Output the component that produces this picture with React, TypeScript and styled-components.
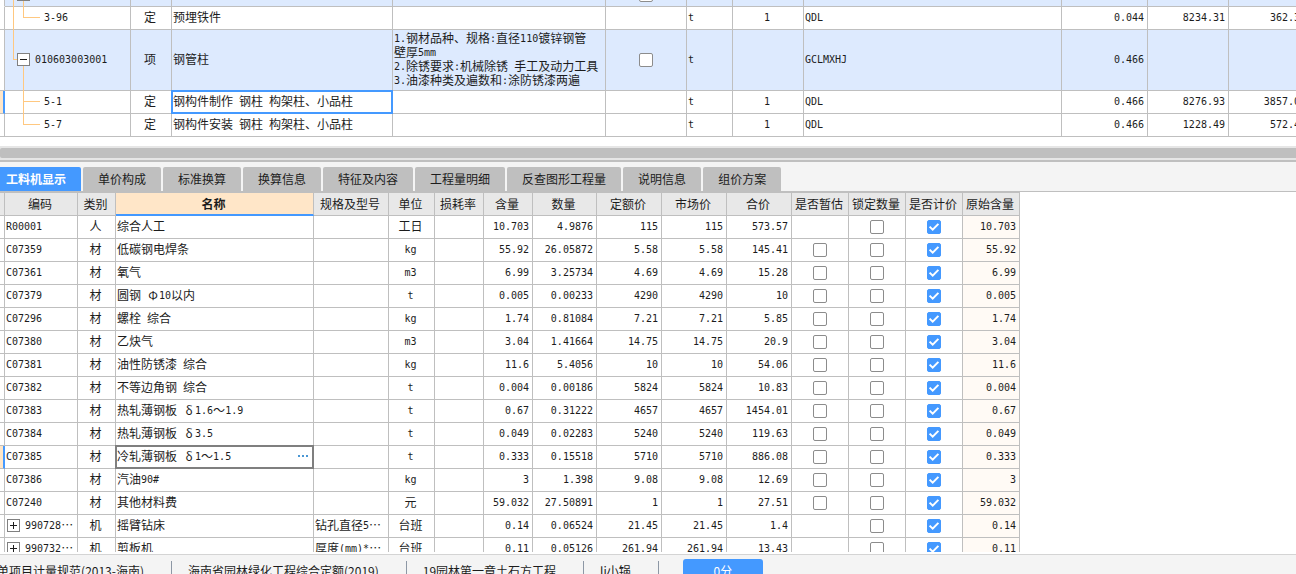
import React, { useState } from "react";
import styled, { createGlobalStyle, css } from "styled-components";

const color = {
  line: "#bfbfbf",
  blue: "#4499ff",
  paleBlue: "#ddeafe",
  peach: "#ffe6c8",
  tree: "#ffc880",
  text: "#1c1c1c",
  head: "#e8e8e8",
  panel: "#f4f4f4",
};

const GlobalStyle = createGlobalStyle`
  * { box-sizing: border-box; }
  body {
    margin: 0;
    overflow: hidden;
    background: #fff;
    color: ${color.text};
    font: 12px/14px "Noto Sans CJK SC", sans-serif;
  }
`;

const Page = styled.div`
  display: flex;
  flex-direction: column;
  height: 100vh;
`;

const Half = styled.span`
  font: 10px/10px "DejaVu Sans Mono", monospace;
  vertical-align: 1px;
  white-space: pre;
`;

/* Sets ASCII runs in the half-width face and leaves Chinese text in the body face. */
function Mixed({ text }: { text: string }) {
  return (
    <>
      {text.split(/([\x20-\x7e]+)/).map((run, i) => (i % 2 ? <Half key={i}>{run}</Half> : run))}
    </>
  );
}

/* ---------- grid ---------- */

const Grid = styled.table<{ $min: number; $fill?: boolean }>`
  table-layout: fixed;
  border-spacing: 0;
  width: ${(p) => (p.$fill ? "100%" : `${p.$min}px`)};
  min-width: ${(p) => p.$min}px;
`;

const Row = styled.tr<{ $group?: boolean; $tall?: boolean }>`
  height: ${(p) => (p.$tall ? 61 : 23)}px;
  background: ${(p) => (p.$group ? color.paleBlue : "#fff")};
`;

const HeadCell = styled.th<{ $active?: boolean }>`
  height: 23px;
  padding: 0 2px 0 0;
  background: ${(p) => (p.$active ? color.peach : color.head)};
  border-right: 1px solid ${color.line};
  border-bottom: ${(p) => (p.$active ? `2px solid ${color.blue}` : `1px solid ${color.line}`)};
  font-weight: ${(p) => (p.$active ? 700 : 400)};
  white-space: nowrap;
`;

const Cell = styled.td<{
  $align?: "left" | "center" | "right";
  $frame?: string;
  $tint?: boolean;
}>`
  position: relative;
  padding: 0 3px 2px 1px;
  border-right: 1px solid ${color.line};
  border-bottom: 1px solid ${color.line};
  text-align: ${(p) => p.$align ?? "left"};
  white-space: nowrap;
  ${(p) => p.$tint && css`background: #fffaf5;`}
  ${(p) =>
    p.$frame &&
    css`
      &::after {
        content: "";
        position: absolute;
        inset: -1px;
        border: 2px solid ${p.$frame};
        pointer-events: none;
      }
    `}
`;

const TickCell = styled(Cell)`
  padding: 0 2px;
`;

const Gutter = styled.td<{ $current?: boolean; $open?: boolean }>`
  padding: 0;
  background: ${(p) => (p.$current ? color.peach : "#fff")};
  border-right: ${(p) => (p.$current ? `2px solid ${color.blue}` : `1px solid ${color.line}`)};
  border-bottom: 1px solid ${(p) => (p.$open ? "transparent" : color.line)};
`;

/* ---------- tick box ---------- */

const TickWrap = styled.span`
  display: grid;
  width: 14px;
  height: 14px;
  margin: 0 auto;
  > * { grid-area: 1 / 1; }
  > svg { pointer-events: none; }
`;

const TickInput = styled.input`
  appearance: none;
  width: 14px;
  height: 14px;
  margin: 0;
  border: 1px solid #8c8c8c;
  border-radius: 2px;
  background: #fff;
  &:checked {
    border-color: ${color.blue};
    background: ${color.blue};
  }
`;

function Tick({ initial = false, label }: { initial?: boolean; label: string }) {
  const [on, setOn] = useState(initial);
  return (
    <TickWrap>
      <TickInput type="checkbox" aria-label={label} checked={on} onChange={() => setOn(!on)} />
      {on && (
        <svg width="14" height="14" viewBox="0 0 14 14" fill="none">
          <path d="M2.6 6.6 5.7 9.6 11.4 3.9" stroke="#fff" strokeWidth="2" />
        </svg>
      )}
    </TickWrap>
  );
}

/* ---------- bill of quantities tree ---------- */

const Expander = styled.button`
  position: relative;
  z-index: 1;
  display: grid;
  place-items: center;
  flex: none;
  width: 13px;
  height: 13px;
  padding: 0;
  border: 1px solid #808080;
  background: #fff;
`;

function ExpandButton({ open, label }: { open: boolean; label: string }) {
  return (
    <Expander type="button" aria-label={label} aria-expanded={open}>
      <svg width="11" height="11" viewBox="0 0 11 11" stroke="#1c1c1c" shapeRendering="crispEdges">
        <path d={open ? "M2 5.5H9" : "M2 5.5H9M5.5 2V9"} />
      </svg>
    </Expander>
  );
}

const TreeLines = styled.svg`
  position: absolute;
  left: 0;
  top: 0;
  overflow: visible;
`;

const CodeBox = styled.div<{ $indent: number }>`
  display: flex;
  align-items: center;
  gap: 5px;
  padding-left: ${(p) => p.$indent}px;
`;

const Notes = styled.div`
  line-height: 14px;
`;

const billColumns = [5, 126, 41, 221, 213, 81, 46, 71, 258, 86, 81];

type Bill = {
  code: string;
  kind: string;
  name: string;
  notes?: string[];
  unit: string;
  factor?: string;
  formula: string;
  qty: string;
  price?: string;
  total?: string;
  group?: boolean;
  current?: boolean;
  first?: boolean;
  lines: string;
};

const bills: Bill[] = [
  { code: "", kind: "", name: "", unit: "", formula: "", qty: "", group: true, first: true, lines: "M8.5 0V23M18.5 16V23" },
  { code: "3-96", kind: "定", name: "预埋铁件", unit: "t", factor: "1", formula: "QDL", qty: "0.044", price: "8234.31", total: "362.31", lines: "M8.5 0V23M18.5 0V10.5H35" },
  {
    code: "010603003001", kind: "项", name: "钢管柱",
    notes: ["1.钢材品种、规格:直径110镀锌钢管", "壁厚5mm", "2.除锈要求:机械除锈 手工及动力工具", "3.油漆种类及遍数和:涂防锈漆两遍"],
    unit: "t", formula: "GCLMXHJ", qty: "0.466", group: true, lines: "M8.5 0V29.5H12M18.5 35V61",
  },
  { code: "5-1", kind: "定", name: "钢构件制作 钢柱 构架柱、小品柱", unit: "t", factor: "1", formula: "QDL", qty: "0.466", price: "8276.93", total: "3857.05", current: true, lines: "M18.5 0V23M18 10.5H35" },
  { code: "5-7", kind: "定", name: "钢构件安装 钢柱 构架柱、小品柱", unit: "t", factor: "1", formula: "QDL", qty: "0.466", price: "1228.49", total: "572.48", lines: "M18.5 0V10.5H35" },
];

/* Scrolled to its end, so the first row is cut by the top edge. */
const BillPane = styled.section`
  display: flex;
  flex-direction: column;
  justify-content: flex-end;
  flex: none;
  height: 146px;
  padding-bottom: 9px;
  overflow: hidden;
`;

function BillRow({ b }: { b: Bill }) {
  return (
    <Row $group={b.group} $tall={!!b.notes}>
      <Gutter $current={b.current} $open={b.first} />
      <Cell>
        <TreeLines width="40" height="23" fill="none" stroke={color.tree} shapeRendering="crispEdges">
          <path d={b.lines} />
        </TreeLines>
        <CodeBox $indent={b.group ? 11 : 38}>
          {b.group && <ExpandButton open label={`折叠 ${b.code}`} />}
          <span><Half>{b.code}</Half></span>
        </CodeBox>
      </Cell>
      <Cell $align="center">{b.kind}</Cell>
      <Cell $frame={b.current ? color.blue : undefined}><Mixed text={b.name} /></Cell>
      <Cell>{b.notes && <Notes>{b.notes.map((n) => <div key={n}><Mixed text={n} /></div>)}</Notes>}</Cell>
      <TickCell>{b.group && <Tick label="主要清单" />}</TickCell>
      <Cell><Half>{b.unit}</Half></Cell>
      <Cell $align="center"><Half>{b.factor}</Half></Cell>
      <Cell><Half>{b.formula}</Half></Cell>
      <Cell $align="right"><Half>{b.qty}</Half></Cell>
      <Cell $align="right"><Half>{b.price}</Half></Cell>
      <Cell $align="right"><Half>{b.total}</Half></Cell>
    </Row>
  );
}

/* ---------- splitter and tabs ---------- */

const Splitter = styled.div`
  flex: none;
  padding: 2px 0;
  background: #e6e6e6;
  border-bottom: 2px solid ${color.line};
  &::before {
    content: "";
    display: block;
    height: 10px;
    border-radius: 2px 0 0 2px;
    background: ${color.line};
  }
`;

const TabBar = styled.nav`
  display: flex;
  flex: none;
  gap: 2px;
  padding-top: 5px;
  background: ${color.panel};
  border-bottom: 1px solid ${color.line};
`;

const Tab = styled.button<{ $active?: boolean }>`
  height: 24px;
  padding: 0 15px;
  border: 0;
  border-radius: 2px 2px 0 0;
  background: ${(p) => (p.$active ? color.blue : color.line)};
  color: ${(p) => (p.$active ? "#fff" : color.text)};
  font: ${(p) => (p.$active ? 700 : 400)} 12px/14px "Noto Sans CJK SC", sans-serif;
  white-space: nowrap;
  &:first-child { margin-left: -9px; }
`;

const tabs = ["工料机显示", "单价构成", "标准换算", "换算信息", "特征及内容", "工程量明细", "反查图形工程量", "说明信息", "组价方案"];

/* ---------- resource table ---------- */

const ResourcePane = styled.section`
  flex: 1;
  min-height: 0;
  overflow: hidden;
`;

const ResourceGrid = styled(Grid)`
  border-top: 1px solid ${color.line};
`;

const NameBox = styled.div`
  display: flex;
  justify-content: space-between;
  align-items: center;
`;

const MoreButton = styled.button`
  display: flex;
  gap: 2px;
  padding: 4px 2px;
  border: 0;
  background: none;
  > i {
    width: 2px;
    height: 2px;
    background: #4a97d4;
  }
`;

const resourceColumns = [5, 73, 38, 198, 75, 46, 49, 49, 64, 65, 65, 65, 57, 57, 57, 57];
const resourceHeads = ["", "编码", "类别", "名称", "规格及型号", "单位", "损耗率", "含量", "数量", "定额价", "市场价", "合价", "是否暂估", "锁定数量", "是否计价", "原始含量"];

/* code, kind, name, spec, unit, content, quantity, quota price, market price, total */
const resources: string[][] = [
  ["R00001", "人", "综合人工", "", "工日", "10.703", "4.9876", "115", "115", "573.57"],
  ["C07359", "材", "低碳钢电焊条", "", "kg", "55.92", "26.05872", "5.58", "5.58", "145.41"],
  ["C07361", "材", "氧气", "", "m3", "6.99", "3.25734", "4.69", "4.69", "15.28"],
  ["C07379", "材", "圆钢 Φ10以内", "", "t", "0.005", "0.00233", "4290", "4290", "10"],
  ["C07296", "材", "螺栓 综合", "", "kg", "1.74", "0.81084", "7.21", "7.21", "5.85"],
  ["C07380", "材", "乙炔气", "", "m3", "3.04", "1.41664", "14.75", "14.75", "20.9"],
  ["C07381", "材", "油性防锈漆 综合", "", "kg", "11.6", "5.4056", "10", "10", "54.06"],
  ["C07382", "材", "不等边角钢 综合", "", "t", "0.004", "0.00186", "5824", "5824", "10.83"],
  ["C07383", "材", "热轧薄钢板 δ1.6～1.9", "", "t", "0.67", "0.31222", "4657", "4657", "1454.01"],
  ["C07384", "材", "热轧薄钢板 δ3.5", "", "t", "0.049", "0.02283", "5240", "5240", "119.63"],
  ["C07385", "材", "冷轧薄钢板 δ1～1.5", "", "t", "0.333", "0.15518", "5710", "5710", "886.08"],
  ["C07386", "材", "汽油90#", "", "kg", "3", "1.398", "9.08", "9.08", "12.69"],
  ["C07240", "材", "其他材料费", "", "元", "59.032", "27.50891", "1", "1", "27.51"],
  ["990728⋯", "机", "摇臂钻床", "钻孔直径5⋯", "台班", "0.14", "0.06524", "21.45", "21.45", "1.4"],
  ["990732⋯", "机", "剪板机", "厚度(mm)*⋯", "台班", "0.11", "0.05126", "261.94", "261.94", "13.43"],
];

/* Greek letters take a full-width square, as Chinese characters do. */
const Greek = styled.span`
  display: inline-block;
  width: 12px;
  text-align: center;
`;

function ResourceName({ text }: { text: string }) {
  return (
    <span>
      {text.split(/([Φδ])/).map((part, i) => (i % 2 ? <Greek key={i}>{part}</Greek> : <Mixed key={i} text={part} />))}
    </span>
  );
}

function ResourceRow({ r }: { r: string[] }) {
  const [code, kind, name, spec, unit, ...numbers] = r;
  const current = code === "C07385";
  return (
    <Row>
      <Gutter $current={current} />
      <Cell>
        <CodeBox $indent={kind === "机" ? 1 : 0}>
          {kind === "机" && <ExpandButton open={false} label={`展开 ${name}`} />}
          <span><Mixed text={code} /></span>
        </CodeBox>
      </Cell>
      <Cell $align="center">{kind}</Cell>
      <Cell $frame={current ? "#7f7f7f" : undefined}>
        <NameBox>
          <ResourceName text={name} />
          {current && <MoreButton type="button" aria-label="选择材料"><i /><i /><i /></MoreButton>}
        </NameBox>
      </Cell>
      <Cell><Mixed text={spec} /></Cell>
      <Cell $align="center"><Mixed text={unit} /></Cell>
      <Cell />
      {numbers.map((n, i) => <Cell key={i} $align="right"><Half>{n}</Half></Cell>)}
      <TickCell>{kind === "材" && <Tick label={`${name} 是否暂估`} />}</TickCell>
      <TickCell><Tick label={`${name} 锁定数量`} /></TickCell>
      <TickCell><Tick initial label={`${name} 是否计价`} /></TickCell>
      <Cell $align="right" $tint><Half>{numbers[0]}</Half></Cell>
    </Row>
  );
}

/* ---------- status bar ---------- */

const StatusBar = styled.footer`
  flex: none;
  height: 20px;
  margin-top: 2px;
  overflow: hidden;
  background: ${color.panel};
  border-top: 1px solid #d4d4d4;
`;

const StatusRow = styled.div`
  display: flex;
  align-items: center;
  height: 32px;
`;

const StatusItem = styled.span<{ $lead?: boolean }>`
  display: flex;
  justify-content: flex-end;
  flex: none;
  width: ${(p) => (p.$lead ? "172px" : "auto")};
  padding: 3px 27px 3px ${(p) => (p.$lead ? 0 : 16)}px;
  border-right: 1px solid #8d97a5;
  white-space: nowrap;
`;

const ScoreButton = styled.button`
  width: 80px;
  height: 24px;
  margin-left: 24px;
  border: 0;
  border-radius: 3px;
  background: ${color.blue};
  color: #fff;
  font: 12px/14px "Noto Sans CJK SC", sans-serif;
`;

const sum = (list: number[]) => list.reduce((a, b) => a + b, 0);

export default function App() {
  return (
    <Page>
      <GlobalStyle />
      <BillPane>
        <Grid $min={sum(billColumns) + 81} $fill>
          <colgroup>
            {billColumns.map((w, i) => <col key={i} width={w} />)}
            <col />
          </colgroup>
          <tbody>{bills.map((b) => <BillRow key={b.code} b={b} />)}</tbody>
        </Grid>
      </BillPane>
      <Splitter />
      <TabBar>
        {tabs.map((t, i) => <Tab key={t} type="button" $active={i === 0}>{t}</Tab>)}
      </TabBar>
      <ResourcePane>
        <ResourceGrid $min={sum(resourceColumns)}>
          <colgroup>{resourceColumns.map((w, i) => <col key={i} width={w} />)}</colgroup>
          <thead>
            <tr>{resourceHeads.map((h) => <HeadCell key={h} $active={h === "名称"}>{h}</HeadCell>)}</tr>
          </thead>
          <tbody>{resources.map((r) => <ResourceRow key={r[0]} r={r} />)}</tbody>
        </ResourceGrid>
      </ResourcePane>
      <StatusBar>
        <StatusRow>
          <StatusItem $lead>单项目计量规范(2013-海南)</StatusItem>
          <StatusItem>海南省园林绿化工程综合定额(2019)</StatusItem>
          <StatusItem>19园林第一章土石方工程</StatusItem>
          <StatusItem>li小锅</StatusItem>
          <ScoreButton type="button">0分</ScoreButton>
        </StatusRow>
      </StatusBar>
    </Page>
  );
}
